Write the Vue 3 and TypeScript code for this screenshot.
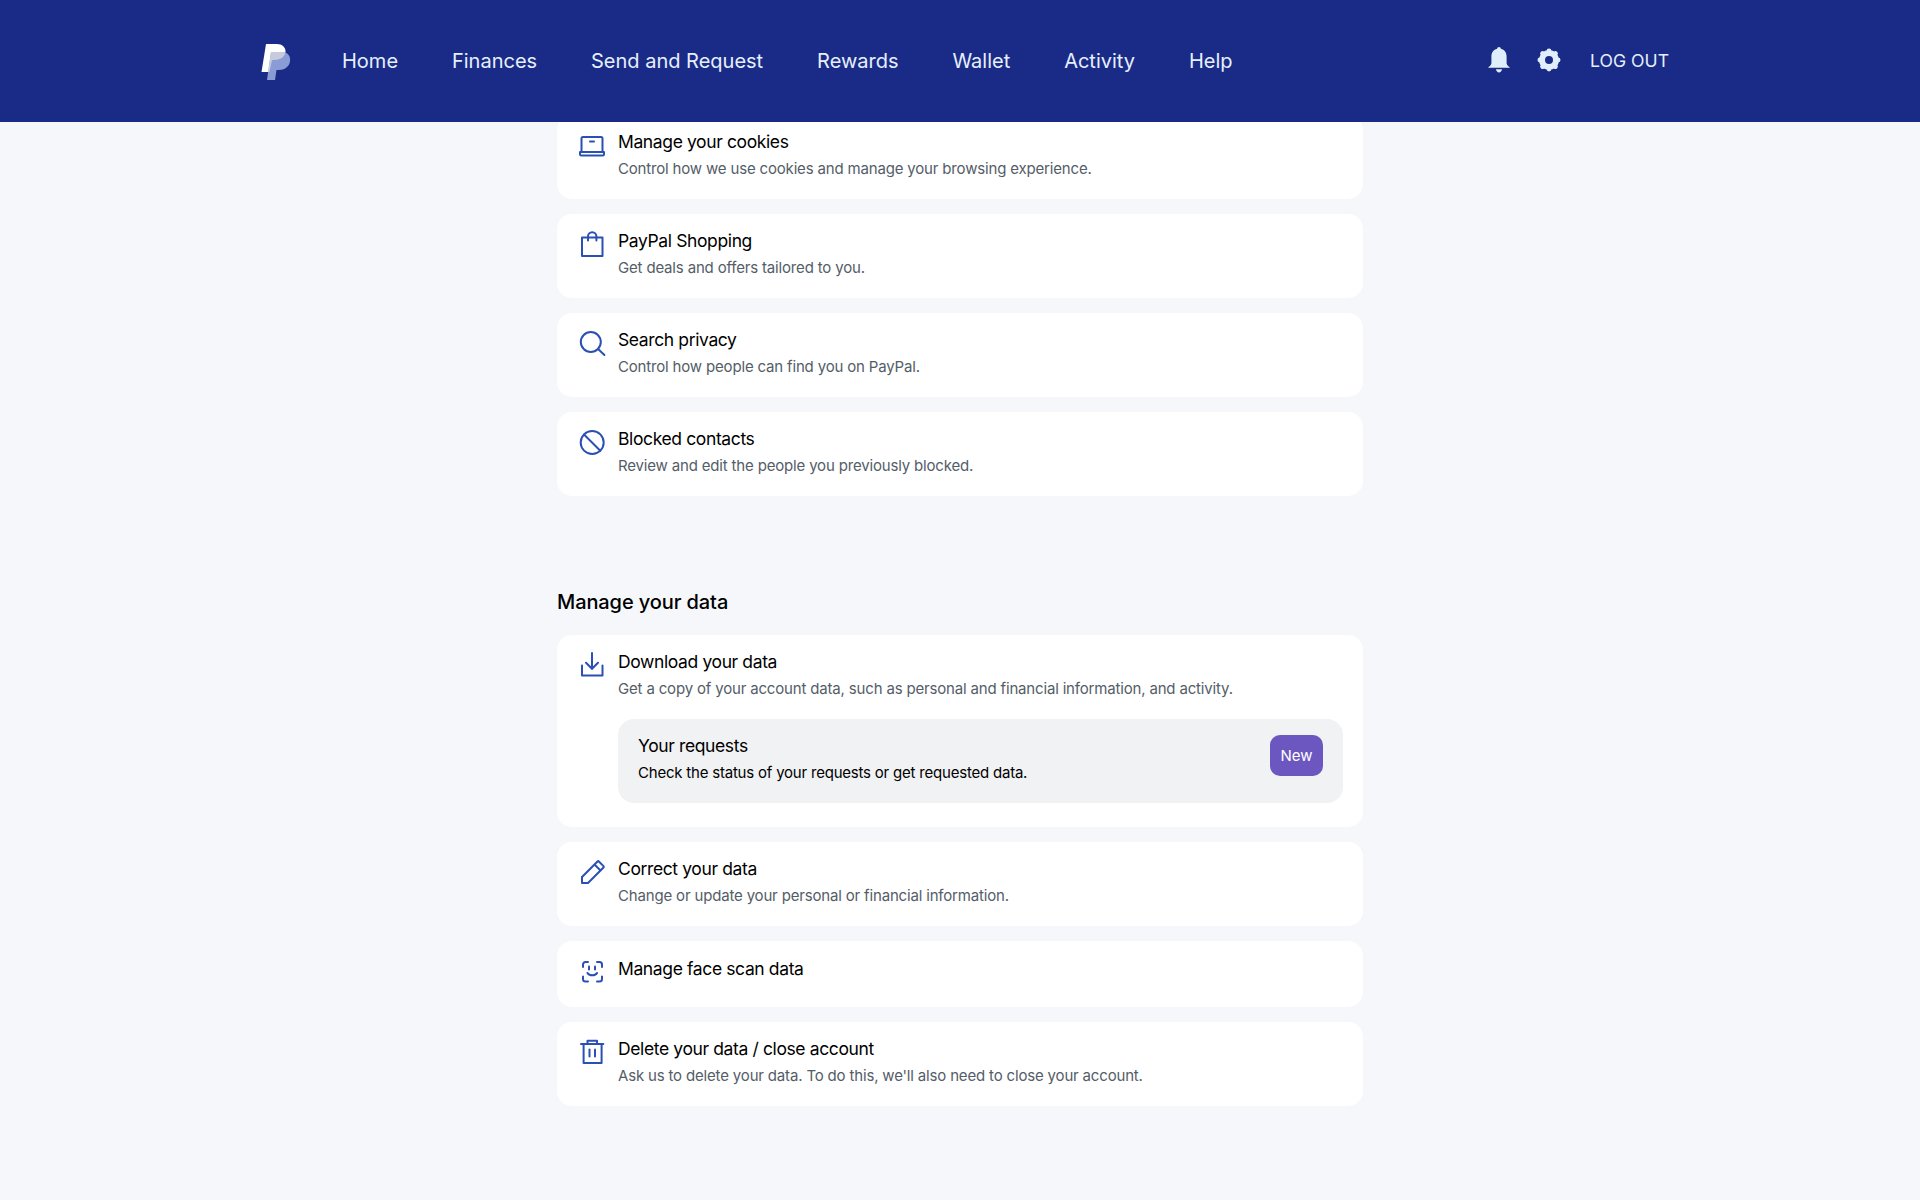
<script setup lang="ts">
interface Row {
  title: string;
  desc?: string;
  icon: string[];
  circles?: [number, number, number][];
}

const navLinks = ['Home', 'Finances', 'Send and Request', 'Rewards', 'Wallet', 'Activity', 'Help'];

const privacyRows: Row[] = [
  {
    title: 'Manage your cookies',
    desc: 'Control how we use cookies and manage your browsing experience.',
    icon: [
      'M3.5 21V7.5A1.5 1.5 0 0 1 5 6h18a1.5 1.5 0 0 1 1.5 1.5V21',
      'M2 21h24v2a1.5 1.5 0 0 1-1.5 1.5h-21A1.5 1.5 0 0 1 2 23z',
      'M12 10.5h4'
    ]
  },
  {
    title: 'PayPal Shopping',
    desc: 'Get deals and offers tailored to you.',
    icon: ['M4 7.5h20.5V26H4z', 'M10 10.5V6.5a4.2 4.2 0 0 1 8.4 0v4']
  },
  {
    title: 'Search privacy',
    desc: 'Control how people can find you on PayPal.',
    icon: ['M20.1 20.1L26.4 26'],
    circles: [[12.8, 13, 10]]
  },
  {
    title: 'Blocked contacts',
    desc: 'Review and edit the people you previously blocked.',
    icon: ['M6 6.5l16.3 16.2'],
    circles: [[14.2, 14.5, 11.5]]
  }
];

const dataRows: Row[] = [
  {
    title: 'Correct your data',
    desc: 'Change or update your personal or financial information.',
    icon: [
      'M4 19L19.5 3.5a1 1 0 0 1 1.4 0l4.6 4.6a1 1 0 0 1 0 1.4L10 25H4z',
      'M17 7l5 5'
    ]
  },
  {
    title: 'Manage face scan data',
    icon: [
      'M5 10V7.5A2.5 2.5 0 0 1 7.5 5H10',
      'M19 5h2.5A2.5 2.5 0 0 1 24 7.5V10',
      'M24 19.5V22a2.5 2.5 0 0 1-2.5 2.5H19',
      'M10 24.5H7.5A2.5 2.5 0 0 1 5 22v-2.5',
      'M11 9.5v3',
      'M17 9.5v3',
      'M9.5 16c1.5 3 8 3 9.5 0'
    ]
  },
  {
    title: 'Delete your data / close account',
    desc: "Ask us to delete your data. To do this, we'll also need to close your account.",
    icon: [
      'M3 6h22.3',
      'M9.5 6V2.8h9.5V6',
      'M5.6 6v19h18V6',
      'M11.5 11.5v7',
      'M17 11.5v7'
    ]
  }
];

const downloadIcon = ['M4 14.5v10h20.5v-10', 'M14 2v15.6', 'M8 11.8l6 6 6-6'];
</script>

<template>
  <div class="page">
    <header class="topbar">
      <svg class="logo" viewBox="0 0 30 36" width="30" height="36">
        <defs>
          <clipPath id="pp-front">
            <path d="M5 0H16C21 0 25 3.5 24.5 8C24 13 19 16 13 16H11L8.5 28H0.5Z" />
          </clipPath>
        </defs>
        <path d="M5 0H16C21 0 25 3.5 24.5 8C24 13 19 16 13 16H11L8.5 28H0.5Z" fill="#fff" />
        <path d="M10 8H21C26.5 8 30 12 29 17.5C28 23 23.5 26 18 26H15.5L14 36H6L10 8Z" fill="#8a9bd6" />
        <path
          d="M10 8H21C26.5 8 30 12 29 17.5C28 23 23.5 26 18 26H15.5L14 36H6L10 8Z"
          fill="#c6cbdd"
          clip-path="url(#pp-front)"
        />
      </svg>
      <nav class="nav">
        <a v-for="link in navLinks" :key="link" class="nav-link">{{ link }}</a>
      </nav>
      <div class="actions">
        <svg class="bell" viewBox="0 0 21 25" width="22" height="26">
          <path
            d="M10.5 0c1 0 1.7.7 1.8 1.7C15.800 2.500 17.800 5.500 17.800 9v6.500c0 1.500.8 2.600 2.600 3.700.4.300.6.500.6.800H0c0-.3.2-.5.6-.8 1.800-1.100 2.600-2.200 2.600-3.700V9c0-3.500 2-6.500 5.500-7.300C8.800.7 9.500 0 10.500 0z"
          />
          <path d="M7.500 21.500h6c-.4 2-1.600 3-3 3s-2.600-1-3-3z" />
        </svg>
        <svg class="gear" viewBox="0 0 24 24" width="24" height="24">
          <circle cx="12" cy="12" r="7" class="gear-ring" />
          <circle
            v-for="n in 8"
            :key="n"
            cx="12"
            cy="2.900"
            r="2.400"
            :transform="`rotate(${(n - 1) * 45} 12 12)`"
          />
        </svg>
        <a class="logout">LOG OUT</a>
      </div>
    </header>

    <main class="content">
      <section class="group">
        <div v-for="row in privacyRows" :key="row.title" class="card">
          <svg class="icon" viewBox="0 0 28 28" width="28" height="28">
            <path v-for="d in row.icon" :key="d" :d="d" />
            <circle v-for="c in row.circles" :key="c[2]" :cx="c[0]" :cy="c[1]" :r="c[2]" />
          </svg>
          <div class="text">
            <div class="title">{{ row.title }}</div>
            <div class="desc">{{ row.desc }}</div>
          </div>
        </div>
      </section>

      <h2 class="heading">Manage your data</h2>

      <section class="group">
        <div class="card card-tall">
          <svg class="icon" viewBox="0 0 28 28" width="28" height="28">
            <path v-for="d in downloadIcon" :key="d" :d="d" />
          </svg>
          <div class="text">
            <div class="title">Download your data</div>
            <div class="desc">Get a copy of your account data, such as personal and financial information, and activity.</div>
            <div class="requests">
              <div>
                <div class="title">Your requests</div>
                <div class="desc desc-dark">Check the status of your requests or get requested data.</div>
              </div>
              <span class="badge">New</span>
            </div>
          </div>
        </div>
        <div v-for="row in dataRows" :key="row.title" class="card" :class="{ 'card-short': !row.desc }">
          <svg class="icon" viewBox="0 0 28 28" width="28" height="28">
            <path v-for="d in row.icon" :key="d" :d="d" />
          </svg>
          <div class="text">
            <div class="title">{{ row.title }}</div>
            <div v-if="row.desc" class="desc">{{ row.desc }}</div>
          </div>
        </div>
      </section>
    </main>
  </div>
</template>

<style scoped>
.page {
  min-height: 1200px;
  background: #f5f7fb;
  font-family: Inter, "Liberation Sans", sans-serif;
  color: #000;
}
.topbar {
  position: fixed;
  top: 0;
  left: 0;
  right: 0;
  height: 121.500px;
  display: flex;
  align-items: center;
  padding: 0 251px 0 261px;
  box-sizing: border-box;
  background: #1a2b87;
  color: #e6f0fc;
  z-index: 2;
}
.logo {
  margin: 2.500px 51px 0 0;
}
.nav {
  display: flex;
  gap: 53.900px;
  padding-top: 1px;
}
.nav-link {
  font-size: 20px;
  line-height: 26px;
}
.actions {
  margin-left: auto;
  display: flex;
  align-items: center;
}
.bell {
  fill: #e0eefb;
  margin-top: -2px;
}
.gear {
  fill: #e0eefb;
  margin: -2px 0 0 27.500px;
}
.gear-ring {
  fill: none;
  stroke: #e0eefb;
  stroke-width: 6;
}
.logout {
  margin-left: 28.800px;
  font-size: 17.600px;
  line-height: 24px;
}
.content {
  width: 806px;
  margin: 0 auto;
  padding-top: 114.700px;
}
.group {
  display: flex;
  flex-direction: column;
  gap: 15px;
}
.card {
  display: flex;
  gap: 12px;
  height: 84px;
  padding: 14px 20px 0 21px;
  box-sizing: border-box;
  background: #fff;
  border-radius: 15px;
}
.card-short {
  height: 66px;
  padding-top: 15px;
}
.card-short .icon {
  margin-top: 1px;
}
.card-tall {
  height: 192px;
}
.icon {
  flex: none;
  margin-top: 2px;
  fill: none;
  stroke: #2b50b4;
  stroke-width: 2;
  stroke-linecap: round;
  stroke-linejoin: round;
}
.text {
  flex: 1;
  min-width: 0;
}
.title {
  font-size: 17.500px;
  line-height: 26px;
  letter-spacing: -0.380px;
}
.desc {
  margin-top: 3px;
  font-size: 15px;
  line-height: 22px;
  letter-spacing: -0.170px;
  color: #545d68;
}
.desc-dark {
  color: #000;
  letter-spacing: -0.210px;
}
.heading {
  margin: 93px 0 19px;
  font-size: 20px;
  line-height: 27px;
  font-weight: 500;
  letter-spacing: -0.100px;
}
.requests {
  display: flex;
  align-items: flex-start;
  justify-content: space-between;
  height: 84px;
  margin-top: 19px;
  padding: 14px 20px 0;
  box-sizing: border-box;
  background: #f1f2f4;
  border-radius: 16px;
}
.badge {
  margin-top: 2.300px;
  padding: 0 10.500px;
  height: 41px;
  line-height: 41px;
  font-size: 15px;
  color: #fff;
  background: #6b57bf;
  border-radius: 10px;
}
</style>

<style>
body {
  background: #f5f7fb;
}
</style>
